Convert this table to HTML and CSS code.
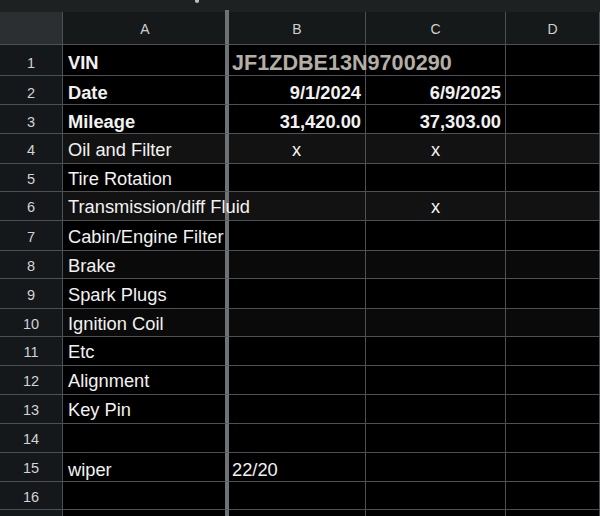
FILE: index.html
```html
<!DOCTYPE html>
<html>
<head>
<meta charset="utf-8">
<link rel="stylesheet" href="styles.css">
</head>
<body>
<div class="topbar"><span class="cut"></span><span class="divtop"></span></div>
<div class="sheet">
  <div class="corner"></div><div class="ch ca">A</div><div class="ch">B</div><div class="ch">C</div><div class="ch">D</div>

  <div class="rh lo">1</div><div class="c ca b">VIN</div><div class="c vin">JF1ZDBE13N9700290</div><div class="c"></div><div class="c"></div>
  <div class="rh lo">2</div><div class="c ca b">Date</div><div class="c r b">9/1/2024</div><div class="c r b">6/9/2025</div><div class="c"></div>
  <div class="rh lo">3</div><div class="c ca b">Mileage</div><div class="c r b">31,420.00</div><div class="c r b">37,303.00</div><div class="c"></div>
  <div class="rh">4</div><div class="c ca band">Oil and Filter</div><div class="c m band">x</div><div class="c m band">x</div><div class="c band"></div>
  <div class="rh">5</div><div class="c ca">Tire Rotation</div><div class="c"></div><div class="c"></div><div class="c"></div>
  <div class="rh">6</div><div class="c ca band ovf">Transmission/diff Fluid</div><div class="c band"></div><div class="c m band">x</div><div class="c band"></div>
  <div class="rh">7</div><div class="c ca">Cabin/Engine Filter</div><div class="c"></div><div class="c"></div><div class="c"></div>
  <div class="rh">8</div><div class="c ca band2">Brake</div><div class="c band2"></div><div class="c band2"></div><div class="c band2"></div>
  <div class="rh">9</div><div class="c ca">Spark Plugs</div><div class="c"></div><div class="c"></div><div class="c"></div>
  <div class="rh">10</div><div class="c ca band2">Ignition Coil</div><div class="c band2"></div><div class="c band2"></div><div class="c band2"></div>
  <div class="rh">11</div><div class="c ca">Etc</div><div class="c"></div><div class="c"></div><div class="c"></div>
  <div class="rh">12</div><div class="c ca">Alignment</div><div class="c"></div><div class="c"></div><div class="c"></div>
  <div class="rh">13</div><div class="c ca">Key Pin</div><div class="c"></div><div class="c"></div><div class="c"></div>
  <div class="rh">14</div><div class="c ca"></div><div class="c"></div><div class="c"></div><div class="c"></div>
  <div class="rh">15</div><div class="c ca lo">wiper</div><div class="c lo">22/20</div><div class="c"></div><div class="c"></div>
  <div class="rh">16</div><div class="c ca"></div><div class="c"></div><div class="c"></div><div class="c"></div>
  <div class="rh"></div><div class="c ca"></div><div class="c"></div><div class="c"></div><div class="c"></div>
</div>
</body>
</html>
```
FILE: styles.css
```css
* { box-sizing: border-box; }
html, body { margin: 0; padding: 0; background: #000; }
body {
  width: 600px;
  height: 516px;
  overflow: hidden;
  font-family: "Liberation Sans", Arial, sans-serif;
  color: #f2f2f2;
}
.topbar {
  height: 12px;
  background: #1d2122;
  position: relative;
}
.cut {
  position: absolute;
  left: 195px;
  top: 0;
  width: 4px;
  height: 3px;
  border-radius: 0 0 2px 2px;
  background: #bdbdbd;
}
.divtop {
  position: absolute;
  left: 225px;
  top: 10px;
  width: 4px;
  height: 2px;
  background: #707478;
}
.sheet {
  display: grid;
  grid-template-columns: 63px 166px 137px 140px 94px;
  grid-template-rows: 33px 31px 29px 29px 30px 28px 29px 30px 28px 30px 28px 29px 29px 29px 29px 29px 28px 20px;
}
.sheet > div {
  border-right: 1px solid #4e5153;
  border-bottom: 1px solid #4e5153;
  display: flex;
  align-items: center;
  white-space: nowrap;
  min-width: 0;
}
.corner { background: #2c2f31; }
.ch {
  background: #15191a;
  justify-content: center;
  font-size: 14px;
  color: #cfd1d2;
  padding-top: 2px;
}
.sheet > .ca { border-right: 4px solid #6e7275; }
.ch.ca { padding-right: 3px; }
.rh {
  background: #15181a;
  justify-content: center;
  font-size: 14.5px;
  color: #d2d4d5;
  padding-top: 2px;
}
.c {
  background: #000;
  font-size: 18.3px;
  padding: 2px 4px 0 4px;
}
.ca { padding-left: 5px; }
.b { font-weight: bold; padding-top: 5px; }
.sheet > .lo { padding-top: 5px; }
.r { justify-content: flex-end; }
.m { justify-content: center; }
.vin {
  font-weight: bold;
  font-size: 21.6px;
  color: #b4aea5;
  padding-top: 5px;
  z-index: 1;
}
.ovf { z-index: 1; }
.band { background: #121212; }
.band2 { background: #0a0a0a; }
.sheet > .c:nth-child(5n+3) { padding-left: 3px; }
```
